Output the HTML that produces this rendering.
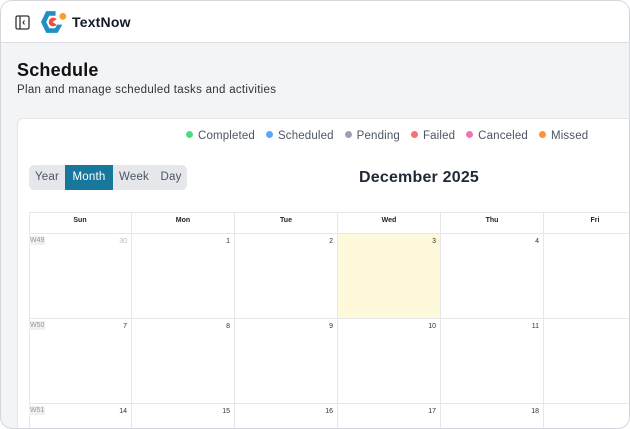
<!DOCTYPE html>
<html><head><meta charset="utf-8"><style>
*{box-sizing:border-box;margin:0;padding:0}
html,body{width:630px;height:429px;overflow:hidden;background:#fff;font-family:"Liberation Sans",sans-serif}
.frame{position:absolute;left:0;top:0;width:630px;height:429px;border:1px solid #d4d6db;border-radius:12px;overflow:hidden;background:#f3f4f6}
.hdr{position:absolute;left:0;top:0;width:630px;height:42px;background:#fff;border-bottom:1px solid #dcdee3}
.brand{position:absolute;left:71px;top:13px;font-size:14px;font-weight:bold;color:#111827;letter-spacing:0.2px}
h1{position:absolute;left:16px;top:59px;font-size:18px;font-weight:bold;color:#111;letter-spacing:0.2px}
.sub{position:absolute;left:16px;top:83px;font-size:11.5px;color:#333;letter-spacing:0.3px}
.card{position:absolute;left:16px;top:117px;width:640px;height:320px;background:#fff;border:1px solid #e3e5e8;border-radius:6px}
.legend{position:absolute;top:129px;left:185px;font-size:11.5px;color:#4b5563;white-space:nowrap;letter-spacing:0.15px}
.legend span{display:inline-block;margin-right:11px}
.legend i{display:inline-block;width:7px;height:7px;border-radius:50%;margin-right:5px;vertical-align:1px}
.seg{position:absolute;left:28px;top:164px;width:158px;height:25px;background:#e5e7eb;border-radius:5px;font-size:11.5px;color:#4b5563;letter-spacing:0.2px}
.seg div{position:absolute;top:0;height:25px;line-height:25px;text-align:center}
.title{position:absolute;left:358px;top:168px;font-size:16px;font-weight:bold;color:#1f2937;letter-spacing:0.2px}
.grid{position:absolute;left:28px;top:211px;width:610px;height:220px;overflow:hidden}
.c{position:absolute;border-right:1px solid #e5e7eb;border-bottom:1px solid #e5e7eb;font-size:7px;color:#333}
.hd{font-weight:bold;text-align:center;line-height:10px;color:#222}
.n{position:absolute;right:4px;top:4px}
.w{position:absolute;left:0;top:2px;background:#f0f0f0;color:#999;font-size:7px;padding:1px 1px}
</style></head><body>
<div class="frame">
<div class="hdr">
<svg style="position:absolute;left:14px;top:14px" width="15" height="15" viewBox="0 0 15 15"><rect x="1" y="1" width="13" height="13" rx="1.5" fill="none" stroke="#333" stroke-width="1.3"/><line x1="5" y1="1" x2="5" y2="14" stroke="#333" stroke-width="1.3"/><path d="M9.5 5.5 L8 7.5 L9.5 9.5" fill="none" stroke="#333" stroke-width="1.1"/></svg>
<svg style="position:absolute;left:40px;top:9px" width="27" height="25" viewBox="0 0 26 24"><path d="M14 1 L5 1 L0 11.5 L5 22 L16 22 L20.5 14 L15.5 14 L13.5 17.5 L8 17.5 L5 11.5 L8 5.5 L14 5.5 Z" fill="#1f8fc4"/><path d="M15 9 A4.2 4.2 0 1 0 15 14 L11 11.5 Z" fill="#f04e3a"/><circle cx="21" cy="6" r="3.3" fill="#f7a031"/></svg>
<div class="brand">TextNow</div>
</div>
<h1>Schedule</h1>
<div class="sub">Plan and manage scheduled tasks and activities</div>
<div class="card"></div>
<div class="legend"><span><i style="background:#4ade80"></i>Completed</span><span><i style="background:#60a5fa"></i>Scheduled</span><span><i style="background:#9ca3af"></i>Pending</span><span><i style="background:#f87171"></i>Failed</span><span><i style="background:#f472b6"></i>Canceled</span><span><i style="background:#fb923c"></i>Missed</span></div>
<div class="seg"><div style="left:0;width:36px">Year</div><div style="left:36px;width:48px;background:#17789c;color:#fff">Month</div><div style="left:84px;width:42px">Week</div><div style="left:126px;width:32px">Day</div></div>
<div class="title">December 2025</div>
<div class="grid">
<div style="position:absolute;left:0;top:0;width:620px;height:1px;background:#e5e7eb"></div>
<div style="position:absolute;left:0;top:0;width:1px;height:220px;background:#e5e7eb"></div>
<div class="c hd" style="left:0;top:0;width:103px;height:22px;padding-top:4px">Sun</div>
<div class="c hd" style="left:103px;top:0;width:103px;height:22px;padding-top:4px">Mon</div>
<div class="c hd" style="left:206px;top:0;width:103px;height:22px;padding-top:4px">Tue</div>
<div class="c hd" style="left:309px;top:0;width:103px;height:22px;padding-top:4px">Wed</div>
<div class="c hd" style="left:412px;top:0;width:103px;height:22px;padding-top:4px">Thu</div>
<div class="c hd" style="left:515px;top:0;width:103px;height:22px;padding-top:4px">Fri</div>
<div class="c" style="left:0;top:22px;width:103px;height:85px"><span class="w">W49</span><span class="n" style="color:#bbb">30</span></div>
<div class="c" style="left:103px;top:22px;width:103px;height:85px"><span class="n">1</span></div>
<div class="c" style="left:206px;top:22px;width:103px;height:85px"><span class="n">2</span></div>
<div class="c" style="left:309px;top:22px;width:103px;height:85px;background:#fef9db"><span class="n">3</span></div>
<div class="c" style="left:412px;top:22px;width:103px;height:85px"><span class="n">4</span></div>
<div class="c" style="left:515px;top:22px;width:103px;height:85px"></div>
<div class="c" style="left:0;top:107px;width:103px;height:85px"><span class="w">W50</span><span class="n">7</span></div>
<div class="c" style="left:103px;top:107px;width:103px;height:85px"><span class="n">8</span></div>
<div class="c" style="left:206px;top:107px;width:103px;height:85px"><span class="n">9</span></div>
<div class="c" style="left:309px;top:107px;width:103px;height:85px"><span class="n">10</span></div>
<div class="c" style="left:412px;top:107px;width:103px;height:85px"><span class="n">11</span></div>
<div class="c" style="left:515px;top:107px;width:103px;height:85px"></div>
<div class="c" style="left:0;top:192px;width:103px;height:85px"><span class="w">W51</span><span class="n">14</span></div>
<div class="c" style="left:103px;top:192px;width:103px;height:85px"><span class="n">15</span></div>
<div class="c" style="left:206px;top:192px;width:103px;height:85px"><span class="n">16</span></div>
<div class="c" style="left:309px;top:192px;width:103px;height:85px"><span class="n">17</span></div>
<div class="c" style="left:412px;top:192px;width:103px;height:85px"><span class="n">18</span></div>
<div class="c" style="left:515px;top:192px;width:103px;height:85px"></div>
</div>
</div>
</body></html>
